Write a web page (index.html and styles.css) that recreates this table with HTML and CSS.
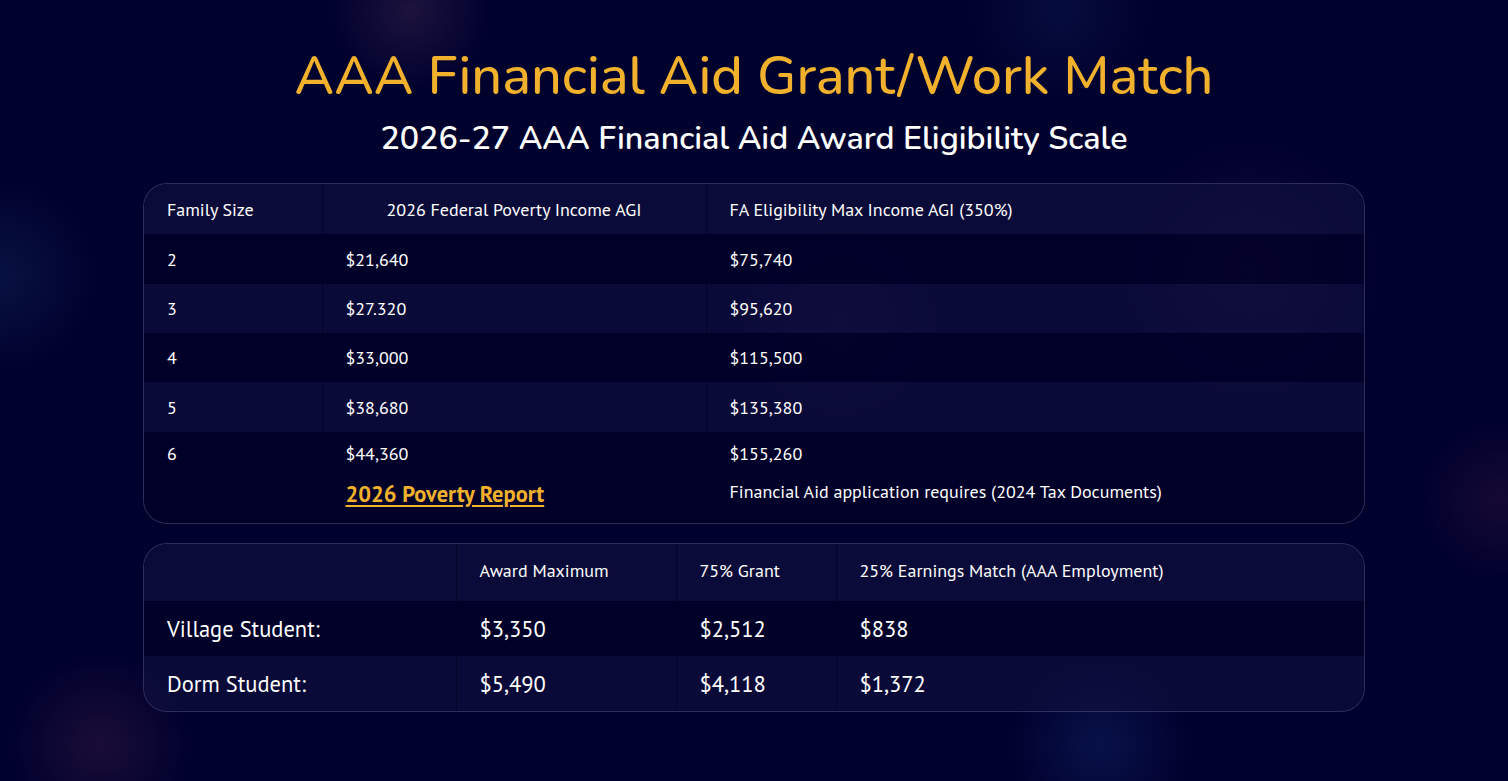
FILE: index.html
```html
<!DOCTYPE html>
<html lang="en">
<head>
<meta charset="utf-8">
<title>AAA Financial Aid Grant/Work Match</title>
<link rel="stylesheet" href="styles.css">
</head>
<body>
<main class="page">
  <h1 class="title">AAA Financial Aid Grant/Work Match</h1>
  <h2 class="subtitle">2026-27 AAA Financial Aid Award Eligibility Scale</h2>

  <section class="card">
    <table class="grid grid-one">
      <colgroup><col class="c1"><col class="c2"><col class="c3"></colgroup>
      <thead>
        <tr class="head"><th>Family Size</th><th class="center">2026 Federal Poverty Income AGI</th><th>FA Eligibility Max Income AGI (350%)</th></tr>
      </thead>
      <tbody>
        <tr class="dark tall"><td>2</td><td>$21,640</td><td>$75,740</td></tr>
        <tr class="light"><td>3</td><td>$27.320</td><td>$95,620</td></tr>
        <tr class="dark"><td>4</td><td>$33,000</td><td>$115,500</td></tr>
        <tr class="light tall"><td>5</td><td>$38,680</td><td>$135,380</td></tr>
        <tr class="dark last"><td>6</td><td>$44,360</td><td>$155,260</td></tr>
        <tr class="dark note"><td></td><td><a class="report" href="#">2026 Poverty Report</a></td><td>Financial Aid application requires (2024 Tax Documents)</td></tr>
      </tbody>
    </table>
  </section>

  <section class="card">
    <table class="grid grid-two">
      <colgroup><col class="d1"><col class="d2"><col class="d3"><col class="d4"></colgroup>
      <thead>
        <tr class="head"><th></th><th>Award Maximum</th><th>75% Grant</th><th>25% Earnings Match (AAA Employment)</th></tr>
      </thead>
      <tbody>
        <tr class="dark"><td>Village Student:</td><td>$3,350</td><td>$2,512</td><td>$838</td></tr>
        <tr class="light"><td>Dorm Student:</td><td>$5,490</td><td>$4,118</td><td>$1,372</td></tr>
      </tbody>
    </table>
  </section>
</main>
</body>
</html>
```
FILE: styles.css
```css
html, body {
  margin: 0;
  padding: 0;
}
body {
  min-height: 781px;
  background-color: #01012e;
  background-image:
    radial-gradient(circle at 410px 10px, rgba(60, 40, 80, 0.45) 0, rgba(60, 40, 80, 0) 80px),
    radial-gradient(circle at 0px 275px, rgba(20, 50, 100, 0.35) 0, rgba(20, 50, 100, 0) 95px),
    radial-gradient(circle at 100px 745px, rgba(50, 25, 65, 0.5) 0, rgba(50, 25, 65, 0) 90px),
    radial-gradient(circle at 1100px 745px, rgba(15, 35, 100, 0.5) 0, rgba(15, 35, 100, 0) 90px),
    radial-gradient(circle at 1500px 500px, rgba(50, 20, 60, 0.4) 0, rgba(50, 20, 60, 0) 80px),
    radial-gradient(circle at 1060px 10px, rgba(15, 35, 90, 0.35) 0, rgba(15, 35, 90, 0) 90px),
    radial-gradient(circle at 1250px 270px, rgba(55, 35, 80, 0.3) 0, rgba(55, 35, 80, 0) 130px),
    radial-gradient(circle at 840px 320px, rgba(55, 30, 80, 0.25) 0, rgba(55, 30, 80, 0) 100px);
  font-family: "PT Sans", "Liberation Sans Narrow", "Open Sans", sans-serif;
  color: #ffffff;
}
.page {
  width: 1222px;
  margin: 0 auto;
  padding-top: 43px;
}
.title {
  margin: 0;
  font-family: "Nunito", "Open Sans", sans-serif;
  font-weight: 500;
  font-size: 54px;
  line-height: 66px;
  color: #f2b12c;
  text-align: center;
}
.subtitle {
  margin: 7px 0 23px;
  font-family: "Nunito", "Open Sans", sans-serif;
  font-weight: 600;
  font-size: 32.2px;
  line-height: 44px;
  color: #ffffff;
  text-align: center;
}
.card {
  border: 1px solid rgba(160, 160, 210, 0.28);
  border-radius: 24px;
  overflow: hidden;
  margin-bottom: 19px;
  background: rgba(2, 2, 40, 0.35);
}
.grid {
  width: 100%;
  border-collapse: collapse;
  table-layout: fixed;
}
.grid th, .grid td {
  text-align: left;
  font-weight: 400;
  padding: 0 23px;
  border-left: 1px solid rgba(0, 0, 30, 0.6);
}
.grid th:first-child, .grid td:first-child {
  border-left: none;
}
.grid th.center {
  text-align: center;
}
.head {
  background: rgba(20, 20, 70, 0.55);
}
.dark {
  background: rgba(0, 0, 40, 0.6);
}
.light {
  background: rgba(20, 20, 70, 0.5);
}
.grid-one .c1 { width: 178px; }
.grid-one .c2 { width: 384px; }
.grid-one th, .grid-one td {
  font-size: 18px;
  height: 49px;
}
.grid-one .head th { height: 50px; }
.grid-one .tall td { height: 50px; }
.grid-one .last td { height: 43px; }
.grid-one .note td {
  height: 43px;
  vertical-align: top;
  padding-top: 5px;
}
.report {
  display: inline-block;
  color: #f2b12c;
  font-weight: 700;
  font-size: 22.5px;
  line-height: 28px;
  text-decoration: underline;
  text-underline-offset: 3px;
}
.grid-two .d1 { width: 312px; }
.grid-two .d2 { width: 220px; }
.grid-two .d3 { width: 160px; }
.grid-two .head th {
  font-size: 18px;
  height: 53px;
  padding-bottom: 4px;
}
.grid-two td {
  font-size: 22.5px;
  height: 55px;
}
```
